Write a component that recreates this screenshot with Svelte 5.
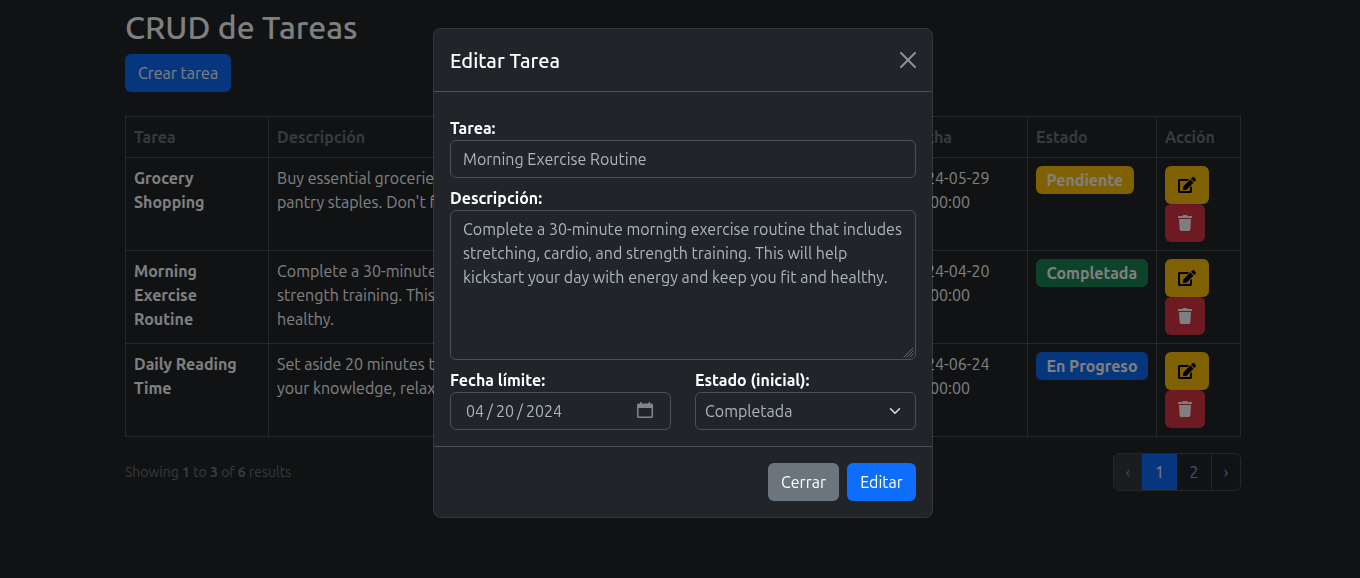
<script>
  const tasks = [
    { name: ['Grocery', 'Shopping'], lines: ["Buy essential groceries for the week including fruits, vegetables, and", "pantry staples. Don't forget to check for discounts and offers."], date: '2024-05-29', status: 'Pendiente', kind: 'warning' },
    { name: ['Morning', 'Exercise', 'Routine'], lines: ['Complete a 30-minute morning exercise routine that includes stretching and', 'strength training. This will help kickstart your day and keep you fit and', 'healthy.'], date: '2024-04-20', status: 'Completada', kind: 'success' },
    { name: ['Daily Reading', 'Time'], lines: ['Set aside 20 minutes to read a book or article. This helps expand', 'your knowledge, relax, and improve your focus.'], date: '2024-06-24', status: 'En Progreso', kind: 'primary' }
  ];
</script>

<main class="page">
  <h1><span>CRUD de Tareas</span></h1>
  <button class="btn primary create">Crear tarea</button>

  <table>
    <colgroup><col class="c1" /><col class="c2" /><col class="c3" /><col class="c4" /><col class="c5" /></colgroup>
    <thead>
      <tr><th>Tarea</th><th>Descripción</th><th>Fecha</th><th>Estado</th><th>Acción</th></tr>
    </thead>
    <tbody>
      {#each tasks as t}
        <tr>
          <td class="name">{#each t.name as n}<div>{n}</div>{/each}</td>
          <td class="desc">{#each t.lines as l}<div>{l}</div>{/each}</td>
          <td class="date">{t.date}<br />00:00:00</td>
          <td><span class="badge {t.kind}">{t.status}</span></td>
          <td>
            <div class="actions">
              <button class="btn warning edit" aria-label="Editar">
                <svg width="18" height="16" viewBox="0 0 576 512"><path fill="#000" d="M402.6 83.2l90.2 90.2c3.8 3.8 3.8 10 0 13.8L274.4 405.6l-92.8 10.3c-12.4 1.4-22.9-9.1-21.5-21.5l10.3-92.8L388.8 83.2c3.8-3.8 10-3.8 13.8 0zm162-22.9l-48.8-48.8c-15.2-15.2-39.9-15.2-55.2 0l-35.4 35.4c-3.8 3.8-3.8 10 0 13.8l90.2 90.2c3.8 3.8 10 3.8 13.8 0l35.4-35.4c15.2-15.3 15.2-40 0-55.2zM384 346.2V448H64V128h229.8c3.2 0 6.2-1.3 8.5-3.5l40-40c7.6-7.6 2.2-20.5-8.5-20.5H48C21.5 64 0 85.5 0 112v352c0 26.5 21.5 48 48 48h352c26.5 0 48-21.5 48-48V306.2c0-10.7-12.9-16-20.5-8.5l-40 40c-2.2 2.3-3.5 5.3-3.5 8.5z" /></svg>
              </button>
              <button class="btn danger remove" aria-label="Eliminar">
                <svg width="14" height="16" viewBox="0 0 448 512"><path fill="#fff" d="M432 32H312l-9.4-18.7A24 24 0 0 0 281.1 0H166.8a23.7 23.7 0 0 0-21.4 13.3L136 32H16A16 16 0 0 0 0 48v32a16 16 0 0 0 16 16h416a16 16 0 0 0 16-16V48a16 16 0 0 0-16-16zM53.2 467a48 48 0 0 0 47.9 45h245.8a48 48 0 0 0 47.9-45L416 128H32z" /></svg>
              </button>
            </div>
          </td>
        </tr>
      {/each}
    </tbody>
  </table>

  <div class="foot">
    <p>Showing <b>1</b> to <b>3</b> of <b>6</b> results</p>
    <nav>
      <span class="pg off">‹</span><span class="pg on">1</span><span class="pg two">2</span><span class="pg next">›</span>
    </nav>
  </div>
</main>

<div class="backdrop">
  <section class="modal">
    <header>
      <h2><span>Editar Tarea</span></h2>
      <svg class="close" width="16" height="16" viewBox="0 0 16 16"><path d="M.293.293a1 1 0 0 1 1.414 0L8 6.586 14.293.293a1 1 0 1 1 1.414 1.414L9.414 8l6.293 6.293a1 1 0 0 1-1.414 1.414L8 9.414l-6.293 6.293a1 1 0 0 1-1.414-1.414L6.586 8 .293 1.707a1 1 0 0 1 0-1.414z" /></svg>
    </header>
    <div class="body">
      <div class="label">Tarea:</div>
      <div class="control title">Morning Exercise Routine</div>
      <div class="label">Descripción:</div>
      <div class="control area">
        <div>Complete a 30-minute morning exercise routine that includes</div>
        <div>stretching, cardio, and strength training. This will help</div>
        <div>kickstart your day with energy and keep you fit and healthy.</div>
        <svg class="grip" width="11" height="11" viewBox="0 0 11 11"><path d="M.5 10.5 10.500.5M3.500 10.500 10.500 3.500M6.500 10.500 10.500 6.500" /></svg>
      </div>
      <div class="row">
        <div>
          <div class="label">Fecha límite:</div>
          <div class="control when">
            <span>04</span><i>/</i><span>20</span><i>/</i><span>2024</span>
            <svg width="16" height="16" viewBox="0 0 16 16"><path fill="#81868a" fill-rule="evenodd" d="M3 0h1.5v1.5h7V0H13v1.5h1.5Q16 1.5 16 3v11.5q0 1.5-1.5 1.5h-13Q0 16 0 14.5V3q0-1.500 1.500-1.500H3zM1.500 6v8.500h13V6z" /></svg>
          </div>
        </div>
        <div>
          <div class="label">Estado (inicial):</div>
          <div class="control pick">
            <span>Completada</span>
            <svg width="12" height="12" viewBox="0 0 16 16"><path fill="none" stroke="#dee2e6" stroke-width="2" stroke-linecap="round" stroke-linejoin="round" d="m2 5 6 6 6-6" /></svg>
          </div>
        </div>
      </div>
    </div>
    <footer>
      <button class="btn secondary">Cerrar</button>
      <button class="btn primary save">Editar</button>
    </footer>
  </section>
</div>

<style>
  :global(body) { margin: 0; background: #212529; overflow: hidden; }
  :global(*) { box-sizing: border-box; }
  .page, .modal { font: 400 16px/24px Ubuntu, 'Noto Sans', sans-serif; }
  .page { width: 1116px; height: 578px; margin: 0 auto; position: relative; left: 3px; padding-top: 8px; color: #dee2e6; }
  h1 { margin: 0 0 8px; font-size: 32px; font-weight: 500; line-height: 38px; color: #fff; }
  .btn { font: inherit; height: 38px; border: 0; border-radius: 6px; color: #fff; padding: 0; display: flex; align-items: center; justify-content: center; white-space: nowrap; }
  .create { width: 106px; }
  .primary { background: #0d6efd; }
  .warning { background: #ffc107; }
  .success { background: #198754; }
  .danger { background: #dc3545; }
  .secondary { background: #6c757d; width: 71px; }
  .save { width: 69px; }
  .edit { width: 44px; }
  .remove { width: 40px; }
  table { width: 1116px; margin-top: 24px; border-collapse: collapse; table-layout: fixed; }
  .c1 { width: 143px; }
  .c2 { width: 631px; }
  .c3 { width: 128px; }
  .c4 { width: 129px; }
  .c5 { width: 84px; }
  th, td { border: 1px solid #495057; padding: 8px; text-align: left; vertical-align: top; }
  th { height: 41px; color: #6c757d; font-weight: 700; }
  td { height: 93px; color: #fff; }
  .name { font-weight: 700; }
  .desc { white-space: nowrap; overflow: hidden; }
  .badge { display: flex; width: max-content; height: 28px; align-items: center; padding: 0 10.4px; border-radius: 6px; font-weight: 700; }
  .foot { display: flex; justify-content: space-between; margin-top: 16px; }
  .foot p { margin: 7px 0 0; font-size: 14px; color: #6c757d; }
  nav { display: flex; width: 128px; height: 38px; border: 1px solid #495057; border-radius: 6px; overflow: hidden; }
  .pg { display: flex; align-items: center; justify-content: center; color: #6ea8fe; }
  .off { width: 28px; background: #343a40; color: #868b90; }
  .on { width: 35px; background: #0d6efd; color: #fff; }
  .two { width: 35px; border-right: 1px solid #495057; }
  .next { flex: 1; }
  .backdrop { position: fixed; inset: 0; background: rgba(0, 0, 0, 0.5); display: flex; justify-content: center; align-items: flex-start; padding: 28px 0 0 6px; }
  .modal { width: 500px; height: 490px; background: #212529; background-clip: padding-box; border: 1px solid rgba(255, 255, 255, 0.15); border-radius: 8px; color: #fff; }
  header { display: flex; align-items: center; justify-content: space-between; height: 63px; padding: 0 16px; border-bottom: 1px solid #495057; }
  h2 { margin: 0; padding-top: 2px; font-size: 20px; font-weight: 500; line-height: 30px; }
  .close { fill: #909294; }
  .body { height: 354px; padding: 24px 16px 0; }
  .label { height: 24px; font-weight: 700; white-space: nowrap; }
  .control { height: 38px; border: 1px solid #495057; border-radius: 6px; padding: 6px 12px; margin-bottom: 8px; color: #adb5bd; white-space: nowrap; }
  .area { position: relative; height: 150px; }
  .grip { position: absolute; right: 1px; bottom: 1px; stroke: #73777b; stroke-width: 0.8; fill: none; }
  .row { display: grid; grid-template-columns: 221px 221px; gap: 24px; }
  .when { display: flex; align-items: center; padding: 0 17px 0 15px; }
  .when i { font-style: normal; margin: 0 3px; }
  .when svg { margin: 0 0 2px auto; }
  .pick { display: flex; align-items: center; justify-content: space-between; padding: 0 14px 0 9px; }
  footer { display: flex; justify-content: flex-end; gap: 8px; padding: 16px; border-top: 1px solid #495057; }
</style>
